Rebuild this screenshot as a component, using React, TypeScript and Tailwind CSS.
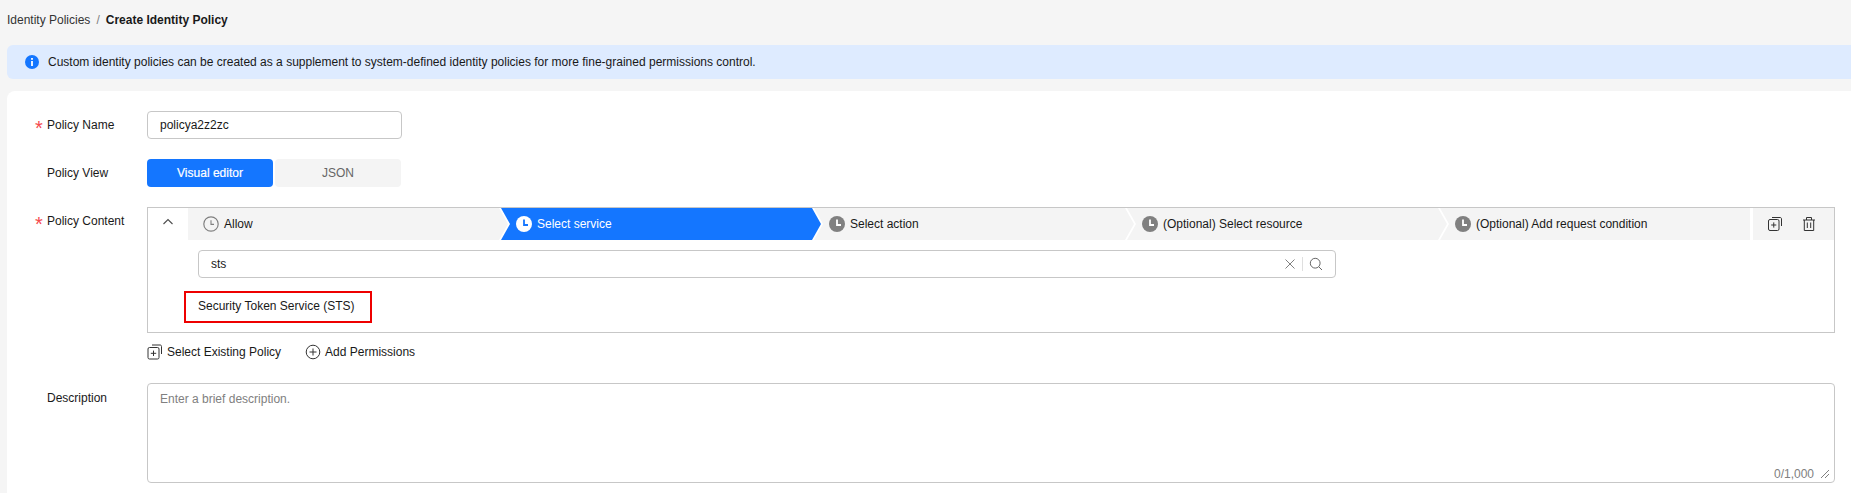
const sans = "font-['Liberation_Sans',Arial,sans-serif]";

function ClockOutline() {
  return (
    <svg width="16" height="16" viewBox="0 0 16 16" fill="none" className="shrink-0">
      <circle cx="8" cy="8" r="7.2" stroke="#808080" strokeWidth="1.2" />
      <path d="M8 4.2V8.4H11" stroke="#808080" strokeWidth="1.1" />
    </svg>
  );
}

function ClockFilled({ color, hand }: { color: string; hand: string }) {
  return (
    <svg width="16" height="16" viewBox="0 0 16 16" className="shrink-0">
      <circle cx="8" cy="8" r="8" fill={color} />
      <path d="M8 3.6V9H12" stroke={hand} strokeWidth="1.8" fill="none" />
    </svg>
  );
}

function Step({ label, active }: { label: string; active?: boolean }) {
  return (
    <div
      className={
        "-ml-[7px] flex h-8 w-[320px] shrink-0 items-center gap-[5px] pl-[15px] [clip-path:polygon(0_0,calc(100%-9px)_0,100%_50%,calc(100%-9px)_100%,0_100%,9px_50%)] " +
        (active ? "bg-[#1476ff] text-white" : "bg-[#f4f4f4] text-[#191919]")
      }
    >
      {active ? <ClockFilled color="#ffffff" hand="#1476ff" /> : <ClockFilled color="#808080" hand="#ffffff" />}
      <span>{label}</span>
    </div>
  );
}

function Star() {
  return <span className="absolute -left-[12px] top-[1px] text-[20px] leading-[20px] text-[#f5484d]">*</span>;
}

function Label({ text, required, className }: { text: string; required?: boolean; className?: string }) {
  return (
    <div className={"w-[100px] shrink-0 " + (className ?? "")}>
      <span className="relative inline-block leading-[16px]">
        {required && <Star />}
        {text}
      </span>
    </div>
  );
}

export default function App() {
  return (
    <div className={`${sans} flex h-[493px] w-[1851px] flex-col overflow-hidden bg-[#f5f5f5] text-[12px] text-[#191919]`}>
      <div className="flex h-[45px] shrink-0 items-start gap-[6px] pl-[7px] pt-[13px] leading-[14px]">
        <span className="text-[#333333]">Identity Policies</span>
        <span className="text-[#808080]">/</span>
        <span className="font-bold">Create Identity Policy</span>
      </div>

      <div className="ml-[7px] flex h-[34px] shrink-0 items-center gap-[9px] rounded-l-[6px] bg-[#deebff] pl-[18px]">
        <svg width="14" height="14" viewBox="0 0 14 14" className="shrink-0">
          <circle cx="7" cy="7" r="7" fill="#1476ff" />
          <rect x="6.1" y="3" width="1.8" height="1.8" fill="#fff" />
          <rect x="6.1" y="6" width="1.8" height="5" fill="#fff" />
        </svg>
        <span>Custom identity policies can be created as a supplement to system-defined identity policies for more fine-grained permissions control.</span>
      </div>

      <div className="ml-[7px] mt-[12px] flex flex-1 flex-col rounded-tl-[8px] bg-white pl-[40px] pr-[16px] pt-[20px]">
        <div className="flex h-7 items-center">
          <Label text="Policy Name" required />
          <div className="flex h-7 w-[255px] items-center rounded-[4px] border border-[#c7c7c7] pl-3">policya2z2zc</div>
        </div>

        <div className="mt-5 flex h-7 items-center">
          <Label text="Policy View" />
          <div className="flex h-7 w-[254px] gap-[2px]">
            <div className="flex w-[126px] items-center justify-center rounded-[4px] bg-[#1476ff] text-white [-webkit-text-stroke:0.2px_#ffffff]">Visual editor</div>
            <div className="flex w-[126px] items-center justify-center rounded-[4px] bg-[#f4f4f4] text-[#666666]">JSON</div>
          </div>
        </div>

        <div className="mt-5 flex">
          <Label text="Policy Content" required className="pt-[5px]" />
          <div className="flex flex-1 flex-col">
            <div className="h-[126px] border border-[#c7c7c7]">
              <div className="flex h-8">
                <div className="flex w-[40px] shrink-0 items-center justify-center">
                  <svg width="12" height="12" viewBox="0 0 12 12" fill="none" className="-mt-[4px]">
                    <path d="M1.5 8L6 3.5L10.5 8" stroke="#4d4d4d" strokeWidth="1.1" />
                  </svg>
                </div>
                <div className="flex h-8 w-[320px] shrink-0 items-center gap-[5px] bg-[#f4f4f4] pl-[15px] [clip-path:polygon(0_0,calc(100%-9px)_0,100%_50%,calc(100%-9px)_100%,0_100%)]">
                  <ClockOutline />
                  <span>Allow</span>
                </div>
                <Step label="Select service" active />
                <Step label="Select action" />
                <Step label="(Optional) Select resource" />
                <div className="-ml-[7px] flex h-8 min-w-0 flex-1 items-center gap-[5px] bg-[#f4f4f4] pl-[15px] [clip-path:polygon(0_0,100%_0,100%_100%,0_100%,9px_50%)]">
                  <ClockFilled color="#808080" hand="#ffffff" />
                  <span>(Optional) Add request condition</span>
                </div>
                <div className="ml-[3px] flex w-[81px] shrink-0 items-center gap-[18px] bg-[#f4f4f4] pl-[14px]">
                  <svg width="16" height="16" viewBox="0 0 16 16" fill="none" stroke="#333333" strokeWidth="1">
                    <rect x="1.5" y="3.5" width="10.5" height="11" rx="1.5" />
                    <path d="M4.2 9H9.3M6.75 6.4V11.6" />
                    <path d="M5 1.5H13C14 1.5 14.5 2 14.5 3V10" />
                  </svg>
                  <svg width="16" height="16" viewBox="0 0 16 16" fill="none" stroke="#333333" strokeWidth="1">
                    <path d="M2 4H14M5.5 4V1.5H10.5V4M3.3 4V14.5H12.7V4M6.3 6.5V12M9.7 6.5V12" />
                  </svg>
                </div>
              </div>

              <div className="ml-[50px] mt-[10px] flex h-7 w-[1138px] items-center justify-between rounded-[4px] border border-[#c7c7c7] pl-3 pr-3">
                <span>sts</span>
                <div className="flex items-center gap-[6px]">
                  <svg width="12" height="12" viewBox="0 0 12 12" fill="none" stroke="#808080" strokeWidth="1">
                    <path d="M1.5 1.5L10.5 10.5M10.5 1.5L1.5 10.5" />
                  </svg>
                  <span className="h-[14px] w-px bg-[#dfdfdf]" />
                  <svg width="14" height="14" viewBox="0 0 14 14" fill="none" stroke="#666666" strokeWidth="1">
                    <circle cx="6.2" cy="6.2" r="4.9" />
                    <path d="M9.8 9.8L13 13" />
                  </svg>
                </div>
              </div>

              <div className="ml-[36px] mt-[13px] flex h-[32px] w-[188px] items-center border-2 border-[#ee0000] pl-3 pb-[3px]">
                Security Token Service (STS)
              </div>
            </div>

            <div className="mt-[10px] flex h-[18px] items-center">
              <svg width="16" height="16" viewBox="0 0 16 16" fill="none" stroke="#333333" strokeWidth="1" className="shrink-0">
                <rect x="1" y="3.5" width="11" height="11.5" rx="1.5" />
                <path d="M3.8 9.3H9.2M6.5 6.6V12" />
                <path d="M5 1H13C14 1 14.5 1.5 14.5 2.5V10" />
              </svg>
              <span className="ml-[4px]">Select Existing Policy</span>
              <svg width="16" height="16" viewBox="0 0 16 16" fill="none" stroke="#333333" strokeWidth="1" className="ml-[24px] shrink-0">
                <circle cx="8" cy="8" r="6.8" />
                <path d="M4.5 8H11.5M8 4.5V11.5" />
              </svg>
              <span className="ml-[4px]">Add Permissions</span>
            </div>
          </div>
        </div>

        <div className="mt-[22px] flex">
          <Label text="Description" className="pt-[6px]" />
          <div className="flex h-[100px] flex-1 flex-col justify-between rounded-[4px] border border-[#c7c7c7] pb-[1px] pl-3 pr-[4px] pt-[8px]">
            <span className="leading-[14px] text-[#808080]">Enter a brief description.</span>
            <div className="flex items-center justify-end gap-[6px] leading-[14px] text-[#808080]">
              <span>0/1,000</span>
              <svg width="10" height="10" viewBox="0 0 10 10" fill="none" stroke="#808080" strokeWidth="1">
                <path d="M1 9L9 1M5 9L9 5" />
              </svg>
            </div>
          </div>
        </div>
      </div>
    </div>
  );
}
